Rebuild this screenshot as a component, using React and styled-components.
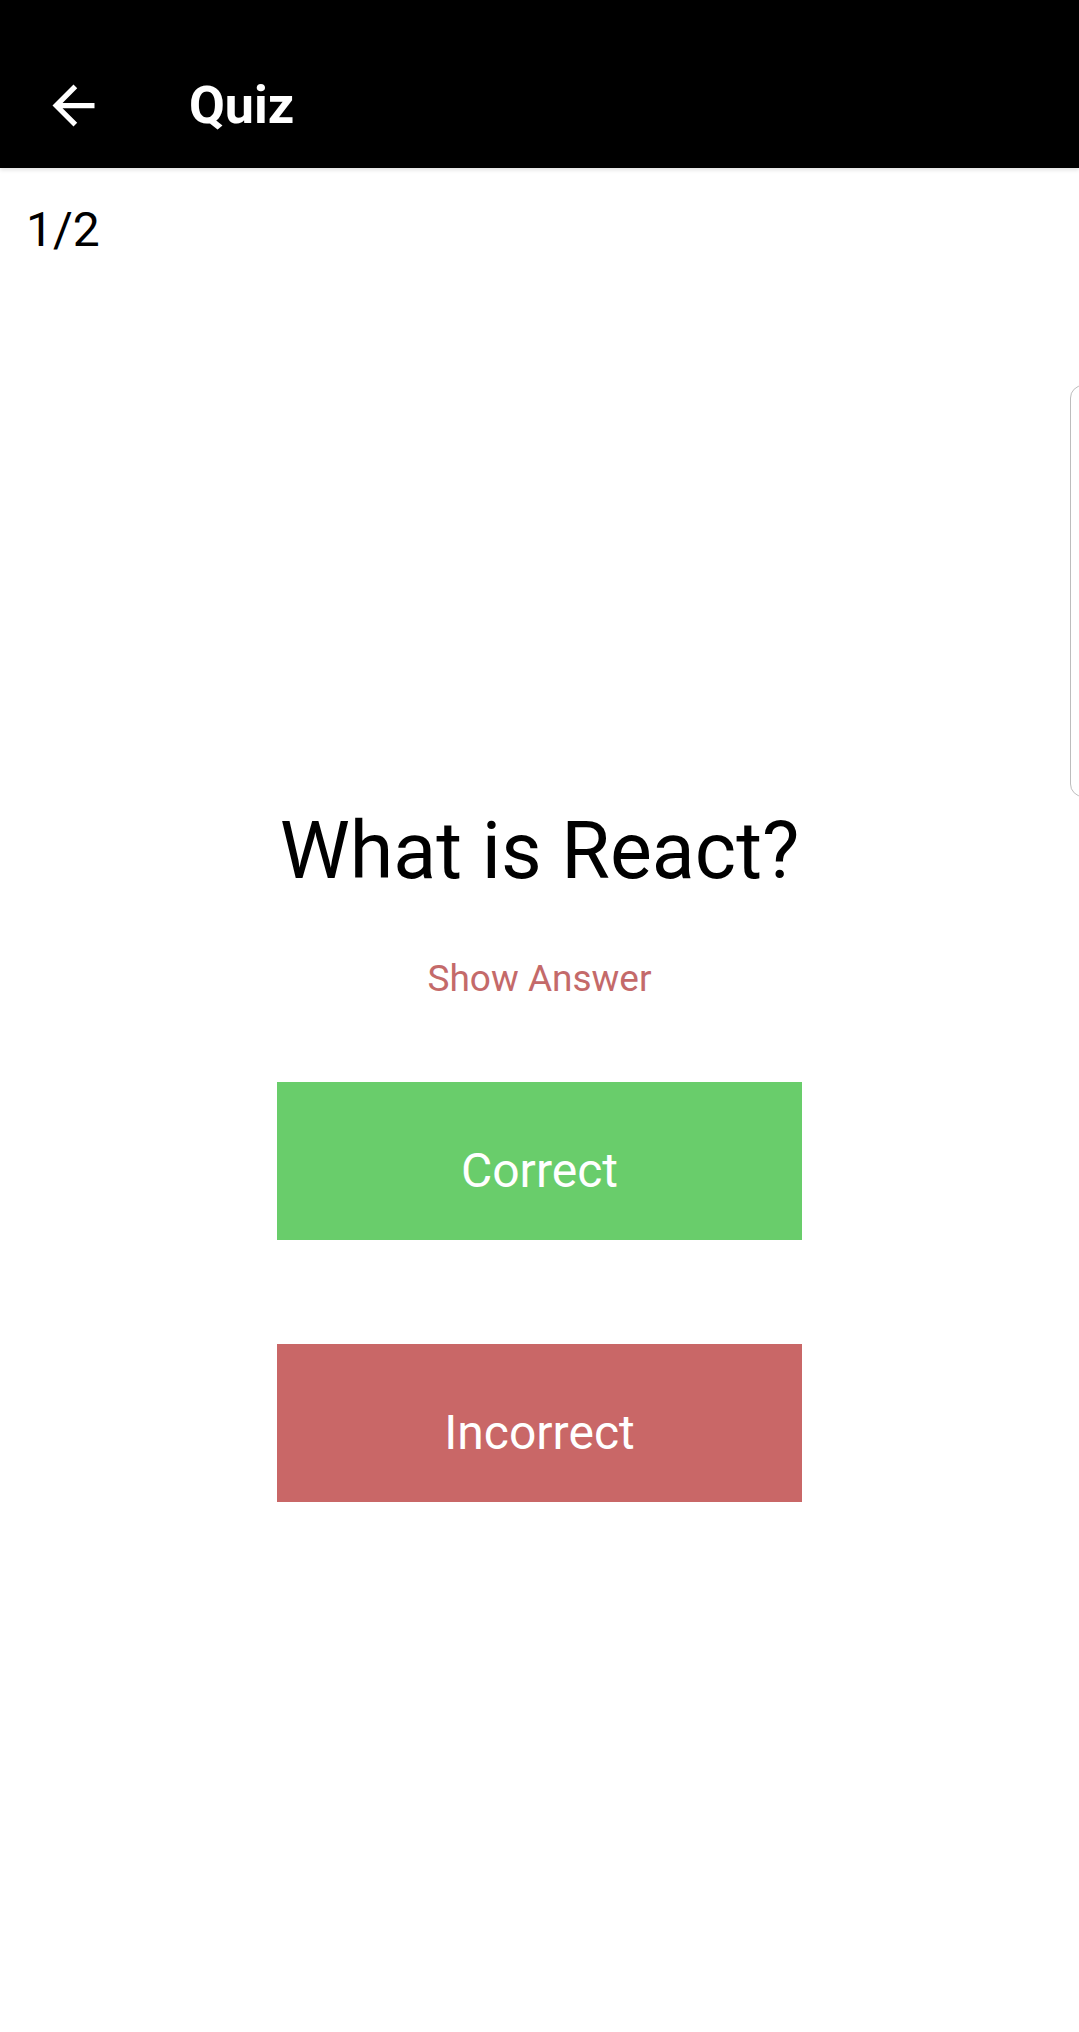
import React from "react";
import styled, { createGlobalStyle } from "styled-components";
import { MdArrowBack } from "react-icons/md";

const GlobalStyle = createGlobalStyle`
  html, body {
    margin: 0;
    padding: 0;
    background: #fff;
  }

  body {
    font-family: Roboto, "Noto Sans", "Liberation Sans", sans-serif;
    -webkit-font-smoothing: antialiased;
  }
`;

const question = {
  index: 1,
  total: 2,
  text: "What is React?",
};

function App() {
  return (
    <Page>
      <GlobalStyle />

      <Header>
        <BackButton aria-label="Back">
          <MdArrowBack size={63} />
        </BackButton>
        <HeaderTitle>Quiz</HeaderTitle>
      </Header>

      <Counter>
        {question.index}/{question.total}
      </Counter>

      {/* next card of the deck peeks in from the right */}
      <Stage>
        <PeekCard />
      </Stage>

      <Question>{question.text}</Question>

      <ShowAnswer>Show Answer</ShowAnswer>

      <ActionButton tone="correct">Correct</ActionButton>
      <ActionButton tone="incorrect" $spaced>
        Incorrect
      </ActionButton>
    </Page>
  );
}

export default App;

const Page = styled.div`
  width: 1079px;
  min-height: 2032px;
  display: flex;
  flex-direction: column;
  background: #fff;
  overflow: hidden;
`;

const Header = styled.header`
  box-sizing: border-box;
  height: 168px;
  padding-top: 42px;
  display: flex;
  align-items: center;
  background: #000;
  box-shadow: 0 2px 4px rgba(0, 0, 0, 0.12);
  position: relative;
  z-index: 1;
`;

const BackButton = styled.button`
  width: 63px;
  height: 63px;
  margin-left: 42px;
  padding: 0;
  border: none;
  background: transparent;
  color: #fff;
  display: flex;
  align-items: center;
  justify-content: center;
`;

const HeaderTitle = styled.h1`
  margin: 0 0 0 84px;
  font-size: 52px;
  line-height: 61px;
  font-weight: 700;
  color: #fff;
`;

const Counter = styled.div`
  margin-top: 34px;
  padding-left: 26px;
  font-size: 48px;
  line-height: 56px;
  color: #000;
`;

const Stage = styled.div`
  margin-top: 127px;
  height: 412px;
  display: flex;
  justify-content: flex-end;
`;

const PeekCard = styled.div`
  box-sizing: border-box;
  flex: 0 0 60px;
  margin-right: -51px;
  border: 1.5px solid #bdbdbd;
  border-radius: 13px;
  background: #fff;
`;

const Question = styled.h2`
  margin: 7px 0 0;
  text-align: center;
  font-size: 79px;
  line-height: 94px;
  font-weight: 400;
  color: #000;
`;

const ShowAnswer = styled.button`
  align-self: center;
  margin-top: 59px;
  padding: 0;
  border: none;
  background: transparent;
  font-family: inherit;
  font-size: 37px;
  line-height: 44px;
  color: #c46a6a;
`;

const ActionButton = styled.button`
  box-sizing: border-box;
  align-self: center;
  width: 525px;
  height: 158px;
  margin-top: ${(p) => (p.$spaced ? "104px" : "81px")};
  padding: 20px 0 0;
  border: none;
  border-radius: 0;
  display: flex;
  align-items: center;
  justify-content: center;
  background: ${(p) => (p.tone === "correct" ? "#69cd6b" : "#c96767")};
  font-family: inherit;
  font-size: 48px;
  line-height: 56px;
  color: #fff;
`;
